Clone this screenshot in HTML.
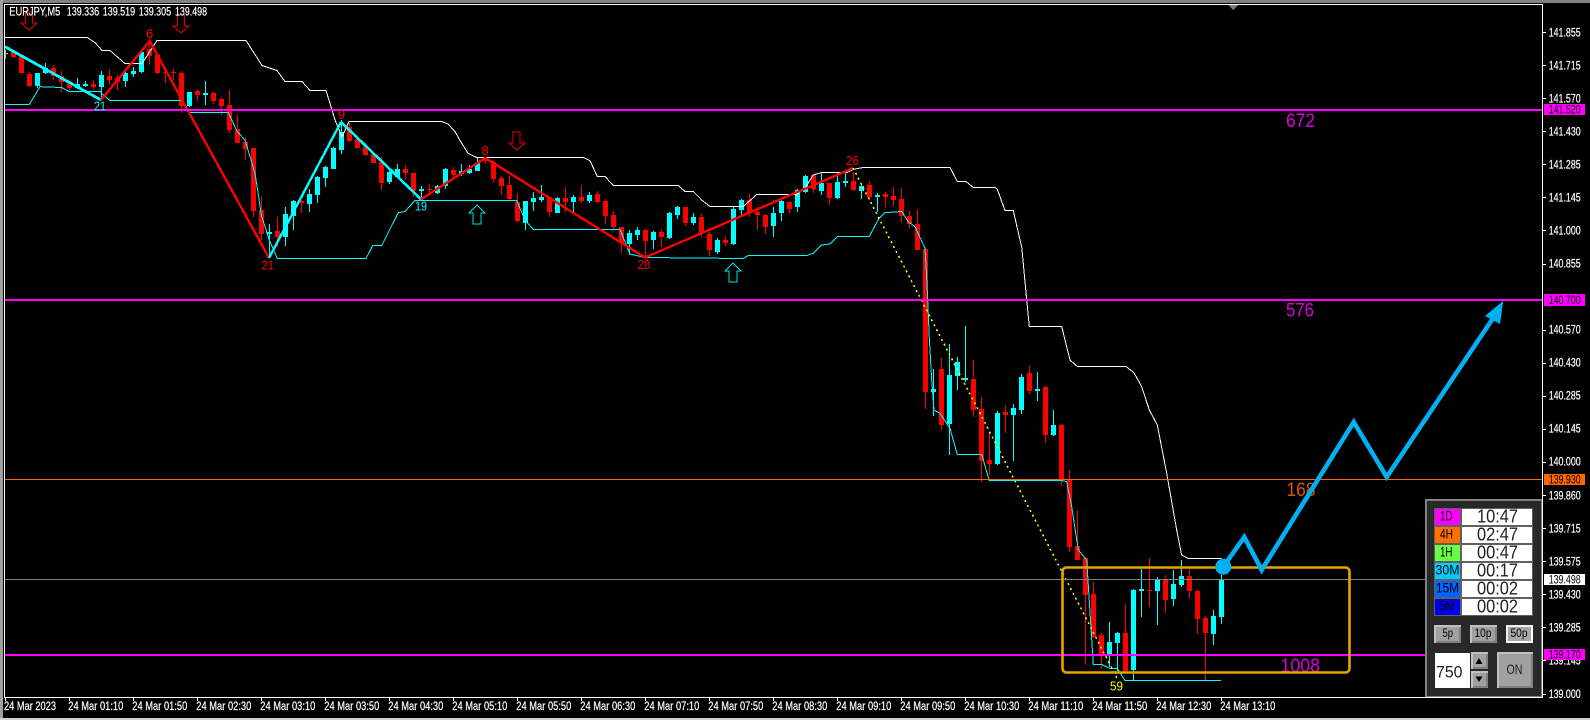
<!DOCTYPE html>
<html><head><meta charset="utf-8"><title>EURJPY,M5</title>
<style>
html,body{margin:0;padding:0;background:#000;width:1590px;height:720px;overflow:hidden}
svg{display:block}
text{font-family:"Liberation Sans",sans-serif}
.ax{font-size:11.5px;fill:#fff;stroke:#fff;stroke-width:.2}
.lb{font-size:11.5px;fill:#000}
.num{font-size:13px}
.lvl{font-size:19px;fill-opacity:.85}
.tm{font-size:18px;fill:#222}
.tf{font-size:14px;fill:#000}
.bt{font-size:12px;fill:#000}
</style></head><body>
<svg width="1590" height="720" viewBox="0 0 1590 720" xmlns="http://www.w3.org/2000/svg">
<rect width="1590" height="720" fill="#000"/>
<rect x="0" y="0" width="1590" height="3" fill="#808080"/>
<rect x="0" y="0" width="3" height="720" fill="#a0a0a0"/>
<rect x="0" y="718" width="1590" height="2" fill="#d0d0d0"/>

<g shape-rendering="crispEdges" fill="none">
<path stroke="#33ff33" stroke-width="1" d="M5.5 50V59M5 53.5H8"/>
<path stroke="#ff0000" stroke-width="1" d="M13.5 50V58M21.5 56V73M29.5 72V87M53.5 65V80M61.5 71V92M69.5 82V90M93.5 80V89M109.5 69V85M117.5 75V90M149.5 42V65M157.5 53V74M165.5 69V83M173.5 69V80M181.5 71V113M197.5 89V101M213.5 92V104M221.5 97V115M229.5 90V133M237.5 115V143M245.5 137V160M253.5 148V217M261.5 196V240M277.5 217V247M301.5 200V213M349.5 123V142M357.5 137V149M365.5 143V156M373.5 153V163M381.5 157V190M405.5 165V180M413.5 173V197M429.5 184V193M453.5 167V177M485.5 157V164M493.5 160V182M501.5 176V195M509.5 176V200M517.5 193V222M549.5 197V217M565.5 187V212M581.5 185V203M597.5 191V203M605.5 199V224M613.5 211V230M621.5 227V253M645.5 229V257M661.5 229V247M685.5 207V226M701.5 214V237M709.5 232V256M725.5 236V246M749.5 194V217M757.5 207V230M765.5 214V234M789.5 201V213M813.5 174V193M829.5 183V205M853.5 172V191M869.5 181V200M885.5 192V207M893.5 187V206M901.5 188V222M909.5 211V228M917.5 210V250M925.5 248V409M941.5 358V430M973.5 360V417M981.5 397V482M989.5 432V475M1005.5 405V433M1029.5 366V394M1045.5 386V443M1061.5 424V486M1069.5 470V552M1077.5 510V560M1085.5 557V665M1093.5 582V638M1101.5 633V669M1125.5 604V672M1149.5 558V607M1165.5 575V613M1189.5 569V598M1197.5 590V634M1205.5 616V680"/>
<path stroke="#ff0000" stroke-width="5" d="M13.5 52V57M21.5 56V73M29.5 74V86M53.5 68V76M61.5 76V82M69.5 83V88M93.5 84V87M109.5 76V80M117.5 78V82M149.5 49V56M157.5 55V73M165.5 72V73M173.5 72V73M181.5 73V106M197.5 91V95M213.5 93V101M221.5 99V106M229.5 105V130M237.5 129V143M245.5 142V149M253.5 148V211M261.5 210V234M277.5 231V237M301.5 201V203M349.5 127V141M357.5 139V148M365.5 147V155M373.5 154V163M381.5 162V183M405.5 169V173M413.5 173V191M429.5 189V190M453.5 170V175M485.5 159V161M493.5 162V179M501.5 178V186M509.5 185V199M517.5 202V221M549.5 197V212M565.5 198V202M581.5 197V201M597.5 194V202M605.5 201V216M613.5 215V227M621.5 227V243M645.5 230V241M661.5 232V237M685.5 207V223M701.5 217V233M709.5 234V250M725.5 240V243M749.5 200V213M757.5 212V215M765.5 215V227M789.5 202V209M813.5 175V189M829.5 183V198M853.5 181V190M869.5 185V197M885.5 194V197M893.5 196V200M901.5 199V216M909.5 216V224M917.5 224V250M925.5 249V392M941.5 369V425M973.5 379V410M981.5 409V461M989.5 460V464M1005.5 412V415M1029.5 373V391M1045.5 387V435M1061.5 425V479M1069.5 480V547M1077.5 546V560M1085.5 558V595M1093.5 594V637M1101.5 635V655M1125.5 633V671M1149.5 590V591M1165.5 579V600M1189.5 576V591M1197.5 591V619M1205.5 618V633"/>
<path stroke="#00ffff" stroke-width="1" d="M37.5 73V88M45.5 63V74M77.5 78V89M85.5 81V87M101.5 71V100M125.5 70V87M133.5 67V77M141.5 50V73M189.5 92V107M205.5 81V105M269.5 224V257M285.5 207V246M293.5 200V230M309.5 189V212M317.5 176V203M325.5 166V187M333.5 147V169M341.5 120V154M389.5 171V184M397.5 164V178M421.5 186V201M437.5 185V194M445.5 168V189M461.5 164V176M469.5 165V174M477.5 158V171M525.5 201V230M533.5 192V211M541.5 185V202M557.5 197V213M573.5 195V212M589.5 192V203M629.5 230V255M637.5 227V240M653.5 231V249M669.5 212V239M677.5 206V219M693.5 213V225M717.5 238V254M733.5 207V245M741.5 199V217M773.5 207V237M781.5 198V221M797.5 189V212M805.5 175V193M821.5 172V195M837.5 173V199M845.5 172V187M861.5 184V199M877.5 193V212M933.5 369V416M949.5 344V455M957.5 357V390M965.5 326V382M997.5 411V465M1013.5 404V461M1021.5 374V414M1037.5 372V401M1053.5 410V436M1109.5 622V667M1117.5 632V671M1133.5 589V680M1141.5 569V617M1157.5 577V625M1173.5 570V606M1181.5 560V587M1213.5 610V645M1221.5 575V624"/>
<path stroke="#00ffff" stroke-width="5" d="M37.5 73V86M45.5 68V73M77.5 84V88M85.5 84V86M101.5 75V87M125.5 73V81M133.5 71V74M141.5 52V72M189.5 92V106M205.5 93V95M269.5 232V234M285.5 214V237M293.5 201V216M309.5 194V204M317.5 177V195M325.5 167V178M333.5 148V169M341.5 132V150M389.5 172V182M397.5 169V177M421.5 189V191M437.5 186V193M445.5 169V186M461.5 171V174M469.5 169V173M477.5 163V171M525.5 201V223M533.5 198V202M541.5 197V200M557.5 198V213M573.5 197V202M589.5 195V201M629.5 233V244M637.5 230V235M653.5 232V240M669.5 213V238M677.5 207V215M693.5 217V223M717.5 240V252M733.5 209V244M741.5 200V210M773.5 213V226M781.5 201V213M797.5 190V207M805.5 176V192M821.5 183V191M837.5 182V198M845.5 181V183M861.5 186V191M877.5 195V197M933.5 389V392M949.5 375V424M957.5 362V376M965.5 378V380M997.5 413V464M1013.5 408V415M1021.5 377V410M1037.5 389V391M1053.5 425V435M1109.5 642V655M1117.5 633V643M1133.5 590V670M1141.5 589V591M1157.5 579V591M1173.5 584V599M1181.5 576V585M1213.5 616V634M1221.5 579V617"/>

<polyline stroke="#ffffff" stroke-width="1" points="5,37.5 87,37.5 95,42.5 102,50.5 110,50.5 125,63.5 142,63.5 157,40.5 246,40.5 262,65.5 277,70.5 285,81.5 302,81.5 310,90.5 326,90.5 328,97 335,120 342,137 349,121.5 441.7,121.5 448,124 455,131.7 461.7,143.3 468,153.3 476.7,157.5 583.3,157.5 590,160.7 597.3,176.5 605,176.5 613.3,185.5 678.3,185.5 685,191.5 693.3,191.5 701.7,200 710,206.5 743.3,206.5 756.7,194.5 796.7,194.5 805,188 813.3,175 821.7,172.5 846.7,172.5 853.3,169.3 863.3,167.5 950,167.5 957.3,181.5 966,181.5 973.3,187.5 995,187.5 997.3,189.3 1005,210.5 1013.3,210.5 1020,240 1021.7,246.7 1026.7,300 1029.3,326.5 1061.7,326.5 1070,360 1077.3,366.5 1126,366.5 1134,372.7 1141.7,386.7 1149.3,410 1157.3,425 1166.7,473.3 1176.7,530 1181.7,555 1188.3,558.5 1221.7,558.5"/>
<polyline stroke="#00ffff" stroke-width="1" points="5,104.5 29.3,104.5 40,86.7 61.7,87.5 69.3,91.5 101,91.5 101,93 110,100.5 181.7,100.5 188.3,112.5 228.3,112.5 233.3,123.3 237.3,131.7 245,140 255,173.3 261.7,216.7 269.3,240 277.3,258.5 366,258.5 372.7,245.5 381.7,245.5 398.3,212.7 405,211.5 415,200.5 516.7,200.5 525,220 533.3,229.5 620,229.5 630,254 645,257.5 743.3,258.5 748.3,255.5 806.7,255.5 813.3,253.3 821.7,245 830,244 837.3,236.5 869.3,236.5 879,218.3 885,212.7 901.7,211.5 908.3,221.7 915,226.7 925,248.3 926.7,278.3 927.7,300 929.3,338.3 931.7,380 934,410 940,413.3 950,428.3 957.3,454.5 981.7,454.5 989.3,480.5 1061.7,480.5 1066.7,481.7 1071.7,506.7 1078.3,550 1086.7,560 1093.3,664.5 1101.7,664.5 1110,668.5 1117.3,668.5 1125,680.5 1221,680.5"/>

<polyline stroke="#00ffff" stroke-width="2.8" points="5,46.7 101,100"/>
<polyline stroke="#ff0000" stroke-width="2.4" points="101,100 149.7,41 269,258"/>
<polyline stroke="#00ffff" stroke-width="2.4" points="269,258 341,122"/>
<polyline stroke="#00ffff" stroke-width="2.6" points="341,122 421,199.3"/>
<polyline stroke="#ff0000" stroke-width="2.4" points="421,199.3 485.3,158 645,257.5 853.3,168"/>
<line x1="853" y1="168" x2="1118" y2="680" stroke="#ffff00" stroke-width="1.5" stroke-dasharray="2 3.5"/>

<g stroke="#e00000" stroke-width="1">
<polygon points="25.5,12 32.5,12 32.5,23 37,23 29,30 21,23 25.5,23"/>
<polygon points="177.5,15 184.5,15 184.5,26 189,26 181,33 173,26 177.5,26"/>
<polygon points="513,132 520,132 520,143 525,143 517,150 509,143 513,143"/>
</g>
<g stroke="#00e0e0" stroke-width="1">
<polygon points="477,205 485,213 481,213 481,224 473,224 473,213 469,213"/>
<polygon points="733,263 741,271 737,271 737,282 729,282 729,271 725,271"/>
</g>
<path d="M1228 5H1238L1233 10Z" fill="#708090" stroke="none"/>

<rect x="5" y="109" width="1537" height="2" fill="#ff00ff"/>
<rect x="5" y="299" width="1537" height="2" fill="#ff00ff"/>
<rect x="5" y="479" width="1537" height="1" fill="#ff6600"/>
<rect x="5" y="579" width="1420" height="1" fill="#808080"/>
<rect x="5" y="654" width="1420" height="2" fill="#ff00ff"/>
</g>

<g class="num">
<text class="num" x="146" y="38" fill="#ff0000">6</text>
<text class="num" x="94" y="110.5" fill="#00ffff" textLength="12" lengthAdjust="spacingAndGlyphs">21</text>
<text class="num" x="338" y="119" fill="#ff0000">9</text>
<text class="num" x="261.5" y="269.5" fill="#ff0000" textLength="12.5" lengthAdjust="spacingAndGlyphs">21</text>
<text class="num" x="481.5" y="155" fill="#ff0000">8</text>
<text class="num" x="415" y="210.5" fill="#00ffff" textLength="12" lengthAdjust="spacingAndGlyphs">19</text>
<text class="num" x="637.5" y="269" fill="#ff0000" textLength="13" lengthAdjust="spacingAndGlyphs">28</text>
<text class="num" x="846" y="165" fill="#ff0000" textLength="13" lengthAdjust="spacingAndGlyphs">26</text>
<text class="num" x="1110" y="690.5" fill="#ffff00" textLength="13" lengthAdjust="spacingAndGlyphs">59</text>
</g>

<text class="lvl" x="1286" y="127" fill="#ff00ff" textLength="29" lengthAdjust="spacingAndGlyphs">672</text>
<text class="lvl" x="1286" y="316.5" fill="#ff00ff" textLength="28" lengthAdjust="spacingAndGlyphs">576</text>
<text class="lvl" x="1286.5" y="496" fill="#ff6600" textLength="29" lengthAdjust="spacingAndGlyphs">168</text>
<text class="lvl" x="1280.5" y="672" fill="#ff00ff" textLength="39.5" lengthAdjust="spacingAndGlyphs">1008</text>

<rect x="1062.5" y="567.5" width="287" height="105" rx="4" ry="4" fill="none" stroke="#e6a400" stroke-width="2.6"/>

<polyline fill="none" stroke="#00b0f0" stroke-width="4.6" stroke-linejoin="miter" points="1223.3,566.7 1244.3,537 1261.7,570 1353.7,422 1386.7,477 1492.5,319"/>
<polygon points="1503.3,300.7 1485,316 1500,324" fill="#00b0f0"/>
<circle cx="1223.3" cy="566.7" r="8" fill="#00b0f0"/>

<text class="ax" x="9.3" y="15.7" textLength="51" lengthAdjust="spacingAndGlyphs">EURJPY,M5</text>
<text class="ax" x="66.7" y="15.7" textLength="32.5" lengthAdjust="spacingAndGlyphs">139.336</text>
<text class="ax" x="102.7" y="15.7" textLength="32.5" lengthAdjust="spacingAndGlyphs">139.519</text>
<text class="ax" x="138.7" y="15.7" textLength="32.5" lengthAdjust="spacingAndGlyphs">139.305</text>
<text class="ax" x="175" y="15.7" textLength="32" lengthAdjust="spacingAndGlyphs">139.498</text>

<!-- price axis labels -->
<text class="ax" x="1548.7" y="36.5" textLength="32" lengthAdjust="spacingAndGlyphs">141.855</text>
<text class="ax" x="1548.7" y="69.5" textLength="32" lengthAdjust="spacingAndGlyphs">141.715</text>
<text class="ax" x="1548.7" y="102.5" textLength="32" lengthAdjust="spacingAndGlyphs">141.570</text>
<text class="ax" x="1548.7" y="135.5" textLength="32" lengthAdjust="spacingAndGlyphs">141.430</text>
<text class="ax" x="1548.7" y="168.5" textLength="32" lengthAdjust="spacingAndGlyphs">141.285</text>
<text class="ax" x="1548.7" y="201.5" textLength="32" lengthAdjust="spacingAndGlyphs">141.145</text>
<text class="ax" x="1548.7" y="234.5" textLength="32" lengthAdjust="spacingAndGlyphs">141.000</text>
<text class="ax" x="1548.7" y="267.5" textLength="32" lengthAdjust="spacingAndGlyphs">140.855</text>
<text class="ax" x="1548.7" y="333.5" textLength="32" lengthAdjust="spacingAndGlyphs">140.570</text>
<text class="ax" x="1548.7" y="366.5" textLength="32" lengthAdjust="spacingAndGlyphs">140.430</text>
<text class="ax" x="1548.7" y="399.5" textLength="32" lengthAdjust="spacingAndGlyphs">140.285</text>
<text class="ax" x="1548.7" y="432.7" textLength="32" lengthAdjust="spacingAndGlyphs">140.145</text>
<text class="ax" x="1548.7" y="465.7" textLength="32" lengthAdjust="spacingAndGlyphs">140.000</text>
<text class="ax" x="1548.7" y="499.5" textLength="32" lengthAdjust="spacingAndGlyphs">139.860</text>
<text class="ax" x="1548.7" y="532.5" textLength="32" lengthAdjust="spacingAndGlyphs">139.715</text>
<text class="ax" x="1548.7" y="565.5" textLength="32" lengthAdjust="spacingAndGlyphs">139.575</text>
<text class="ax" x="1548.7" y="598.5" textLength="32" lengthAdjust="spacingAndGlyphs">139.430</text>
<text class="ax" x="1548.7" y="631.7" textLength="32" lengthAdjust="spacingAndGlyphs">139.285</text>
<text class="ax" x="1548.7" y="664.7" textLength="32" lengthAdjust="spacingAndGlyphs">139.145</text>
<text class="ax" x="1548.7" y="698" textLength="32" lengthAdjust="spacingAndGlyphs">139.000</text>

<!-- panel -->
<g shape-rendering="crispEdges">
<rect x="1426" y="500" width="116" height="197" fill="#282828" stroke="#808080" stroke-width="2"/>
<rect x="1434" y="508" width="99" height="108" fill="#606060"/>
<rect x="1435" y="509" width="25" height="16" fill="#ff00ff"/>
<rect x="1435" y="527" width="25" height="16" fill="#ff7000"/>
<rect x="1435" y="545" width="25" height="16" fill="#66ff44"/>
<rect x="1435" y="563" width="25" height="16" fill="#00ccff"/>
<rect x="1435" y="581" width="25" height="16" fill="#0066ff"/>
<rect x="1435" y="599" width="25" height="16" fill="#0000ee"/>
<rect x="1462" y="509" width="70" height="16" fill="#fff"/>
<rect x="1462" y="527" width="70" height="16" fill="#fff"/>
<rect x="1462" y="545" width="70" height="16" fill="#fff"/>
<rect x="1462" y="563" width="70" height="16" fill="#fff"/>
<rect x="1462" y="581" width="70" height="16" fill="#fff"/>
<rect x="1462" y="599" width="70" height="16" fill="#fff"/>

<rect x="1434" y="625" width="27" height="18" fill="#c0c0c0"/><rect x="1436" y="627" width="25" height="16" fill="#808080"/><rect x="1436" y="627" width="23" height="14" fill="#a0a0a0"/>
<rect x="1470" y="625" width="27" height="18" fill="#c0c0c0"/><rect x="1472" y="627" width="25" height="16" fill="#808080"/><rect x="1472" y="627" width="23" height="14" fill="#a0a0a0"/>
<rect x="1506" y="625" width="27" height="18" fill="#f0f0f0"/><rect x="1508" y="627" width="25" height="16" fill="#ffffff"/><rect x="1508" y="627" width="23" height="14" fill="#a8a8a8"/>

<rect x="1435" y="653" width="35" height="35" fill="#fff"/>
<rect x="1471" y="652" width="17" height="17" fill="#c0c0c0"/><rect x="1473" y="654" width="15" height="15" fill="#808080"/><rect x="1473" y="654" width="13" height="13" fill="#a0a0a0"/>
<rect x="1471" y="671" width="17" height="17" fill="#c0c0c0"/><rect x="1473" y="673" width="15" height="15" fill="#808080"/><rect x="1473" y="673" width="13" height="13" fill="#a0a0a0"/>
<rect x="1497" y="652" width="36" height="36" fill="#c0c0c0"/><rect x="1499" y="654" width="34" height="34" fill="#808080"/><rect x="1499" y="654" width="32" height="32" fill="#a0a0a0"/>
</g>
<path d="M1479 658L1475.5 664H1482.5Z" fill="#000"/>
<path d="M1479 682L1475.5 676.5H1482.5Z" fill="#000"/>

<text class="tf" x="1440" y="520.7" textLength="12.5" lengthAdjust="spacingAndGlyphs">1D</text>
<text class="tf" x="1440" y="538.7" textLength="13" lengthAdjust="spacingAndGlyphs">4H</text>
<text class="tf" x="1440" y="556.7" textLength="12.5" lengthAdjust="spacingAndGlyphs">1H</text>
<text class="tf" x="1435.5" y="574.7" textLength="24" lengthAdjust="spacingAndGlyphs">30M</text>
<text class="tf" x="1436" y="592.7" textLength="23" lengthAdjust="spacingAndGlyphs">15M</text>
<text class="tf" x="1439" y="610.7" textLength="16" lengthAdjust="spacingAndGlyphs">5M</text>
<text class="tm" x="1477" y="522.7" textLength="41" lengthAdjust="spacingAndGlyphs">10:47</text>
<text class="tm" x="1477" y="540.7" textLength="41" lengthAdjust="spacingAndGlyphs">02:47</text>
<text class="tm" x="1477" y="558.7" textLength="41" lengthAdjust="spacingAndGlyphs">00:47</text>
<text class="tm" x="1477" y="576.7" textLength="41" lengthAdjust="spacingAndGlyphs">00:17</text>
<text class="tm" x="1477" y="594.7" textLength="41" lengthAdjust="spacingAndGlyphs">00:02</text>
<text class="tm" x="1477" y="612.7" textLength="41" lengthAdjust="spacingAndGlyphs">00:02</text>
<text class="bt" x="1442.5" y="637" textLength="10.5" lengthAdjust="spacingAndGlyphs">5p</text>
<text class="bt" x="1474.5" y="637" textLength="17" lengthAdjust="spacingAndGlyphs">10p</text>
<text class="bt" x="1510.5" y="637" textLength="17" lengthAdjust="spacingAndGlyphs">50p</text>
<text x="1436" y="677.5" font-size="17" fill="#222" textLength="26.5" lengthAdjust="spacingAndGlyphs">750</text>
<text x="1506.5" y="674" font-size="14" fill="#222" textLength="16" lengthAdjust="spacingAndGlyphs">ON</text>

<!-- frame, ticks -->
<g shape-rendering="crispEdges" fill="none" stroke="#fff" stroke-width="1">
<path d="M4.5 4.5H1542.5V697.5H4.5Z"/>
<path d="M1543 32.5h3M1543 65.5h3M1543 98.5h3M1543 131.5h3M1543 164.5h3M1543 197.5h3M1543 230.5h3M1543 264.5h3M1543 330.5h3M1543 363.5h3M1543 396.5h3M1543 429.5h3M1543 462.5h3M1543 495.5h3M1543 528.5h3M1543 561.5h3M1543 594.5h3M1543 627.5h3M1543 660.5h3M1543 694.5h3"/>
<path d="M5.5 698v3M69.5 698v3M133.5 698v3M197.5 698v3M261.5 698v3M325.5 698v3M389.5 698v3M453.5 698v3M517.5 698v3M581.5 698v3M645.5 698v3M709.5 698v3M773.5 698v3M837.5 698v3M901.5 698v3M965.5 698v3M1029.5 698v3M1093.5 698v3M1157.5 698v3M1221.5 698v3"/>
</g>

<!-- price boxes -->
<g shape-rendering="crispEdges">
<rect x="1544" y="104" width="41" height="11" fill="#ff00ff"/>
<rect x="1544" y="294" width="41" height="12" fill="#ff00ff"/>
<rect x="1544" y="474" width="41" height="11" fill="#ff6600"/>
<rect x="1544" y="574" width="41" height="11" fill="#ffffff"/>
<rect x="1544" y="649" width="41" height="11" fill="#ff00ff"/>
</g>
<text class="lb" x="1548.7" y="113.7" textLength="32" lengthAdjust="spacingAndGlyphs">141.520</text>
<text class="lb" x="1548.7" y="304" textLength="32" lengthAdjust="spacingAndGlyphs">140.700</text>
<text class="lb" x="1548.7" y="483.5" textLength="32" lengthAdjust="spacingAndGlyphs">139.930</text>
<text class="lb" x="1548.7" y="583.5" textLength="32" lengthAdjust="spacingAndGlyphs">139.498</text>
<text class="lb" x="1548.7" y="658.7" textLength="32" lengthAdjust="spacingAndGlyphs">139.170</text>

<!-- time axis -->
<text class="ax" x="4" y="710" textLength="52" lengthAdjust="spacingAndGlyphs">24 Mar 2023</text>
<text class="ax" x="68.3" y="710" textLength="55" lengthAdjust="spacingAndGlyphs">24 Mar 01:10</text>
<text class="ax" x="132.3" y="710" textLength="55" lengthAdjust="spacingAndGlyphs">24 Mar 01:50</text>
<text class="ax" x="196.3" y="710" textLength="55" lengthAdjust="spacingAndGlyphs">24 Mar 02:30</text>
<text class="ax" x="260.3" y="710" textLength="55" lengthAdjust="spacingAndGlyphs">24 Mar 03:10</text>
<text class="ax" x="324.3" y="710" textLength="55" lengthAdjust="spacingAndGlyphs">24 Mar 03:50</text>
<text class="ax" x="388.3" y="710" textLength="55" lengthAdjust="spacingAndGlyphs">24 Mar 04:30</text>
<text class="ax" x="452.3" y="710" textLength="55" lengthAdjust="spacingAndGlyphs">24 Mar 05:10</text>
<text class="ax" x="516.3" y="710" textLength="55" lengthAdjust="spacingAndGlyphs">24 Mar 05:50</text>
<text class="ax" x="580.3" y="710" textLength="55" lengthAdjust="spacingAndGlyphs">24 Mar 06:30</text>
<text class="ax" x="644.3" y="710" textLength="55" lengthAdjust="spacingAndGlyphs">24 Mar 07:10</text>
<text class="ax" x="708.3" y="710" textLength="55" lengthAdjust="spacingAndGlyphs">24 Mar 07:50</text>
<text class="ax" x="772.3" y="710" textLength="55" lengthAdjust="spacingAndGlyphs">24 Mar 08:30</text>
<text class="ax" x="836.3" y="710" textLength="55" lengthAdjust="spacingAndGlyphs">24 Mar 09:10</text>
<text class="ax" x="900.3" y="710" textLength="55" lengthAdjust="spacingAndGlyphs">24 Mar 09:50</text>
<text class="ax" x="964.3" y="710" textLength="55" lengthAdjust="spacingAndGlyphs">24 Mar 10:30</text>
<text class="ax" x="1028.3" y="710" textLength="55" lengthAdjust="spacingAndGlyphs">24 Mar 11:10</text>
<text class="ax" x="1092.3" y="710" textLength="55" lengthAdjust="spacingAndGlyphs">24 Mar 11:50</text>
<text class="ax" x="1156.3" y="710" textLength="55" lengthAdjust="spacingAndGlyphs">24 Mar 12:30</text>
<text class="ax" x="1220.3" y="710" textLength="55" lengthAdjust="spacingAndGlyphs">24 Mar 13:10</text>
</svg>
</body></html>
